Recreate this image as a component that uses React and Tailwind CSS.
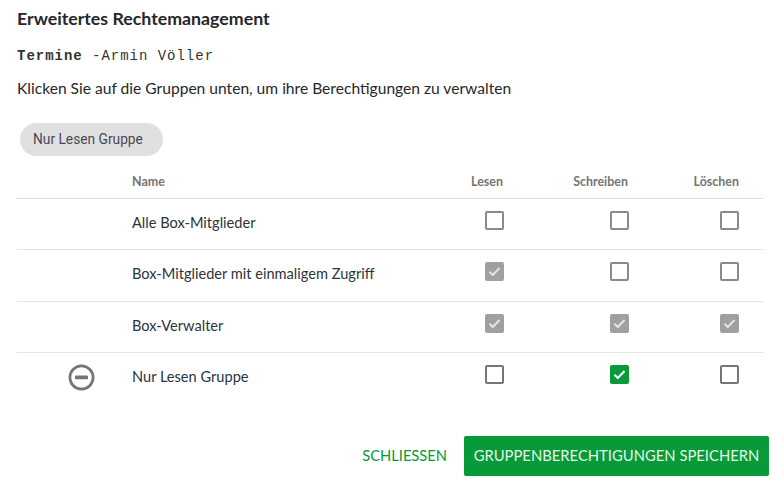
import React from "react";

function Box({ state }) {
  if (state === "off") {
    return <span className="block h-[19px] w-[19px] rounded-[2px] border-2 border-[#8a8a8a] bg-white" />;
  }
  if (state === "strong") {
    return <span className="block h-[19px] w-[19px] rounded-[2px] border-2 border-[#757575] bg-white" />;
  }
  const bg = state === "green" ? "bg-[#069a38]" : "bg-[#a0a0a0]";
  return (
    <span className={`flex h-[19px] w-[19px] items-center justify-center rounded-[2px] ${bg}`}>
      <svg width="13" height="11" viewBox="0 0 13 11" fill="none">
        <path d="M1.5 5.8 L4.8 9 L11.5 2" stroke={state === "green" ? "#ffffff" : "#e4e4e4"} strokeWidth="2.1" />
      </svg>
    </span>
  );
}

function Row({ name, boxes, icon, last, h }) {
  return (
    <div className={`grid grid-cols-[115px_1fr_100px_125px_110px] items-center pr-6 ${h} ${last ? "" : "border-b border-[#e4e4e4]"}`}>
      <div className="flex justify-center pl-[15px] pb-[2px] pr-[2px]">
        {icon && (
          <svg width="27" height="27" viewBox="0 0 27 27" fill="none">
            <circle cx="13.5" cy="13.5" r="11.6" stroke="#757575" strokeWidth="2.7" />
            <rect x="7" y="11.6" width="13" height="3.6" rx="0.8" fill="#757575" />
          </svg>
        )}
      </div>
      <div className="pb-[3px] text-[14.6px] text-[#2b3440]">{name}</div>
      {boxes.map((b, i) => (
        <div key={i} className="flex justify-end pb-[8px]">
          <Box state={b} />
        </div>
      ))}
    </div>
  );
}

export default function App() {
  return (
    <div className="h-[488px] w-[782px] overflow-hidden bg-white pl-[17px] pr-[19px] pt-[8px] font-['Lato','sans-serif']">
      <h1 className="text-[17.75px] font-bold leading-[20px] text-[#25282c]">Erweitertes Rechtemanagement</h1>
      <div className="mt-[18px] font-['Liberation_Mono','monospace'] text-[14px] tracking-[0.98px] leading-[20px] text-[#333333]">
        <b>Termine</b> -Armin Völler
      </div>
      <p className="mt-[12px] text-[15.6px] leading-[20px] text-[#25282c]">
        Klicken Sie auf die Gruppen unten, um ihre Berechtigungen zu verwalten
      </p>
      <div className="ml-[3px] mt-[25px] flex h-[33px] w-[143px] items-center rounded-full bg-[#e0e0e0] pl-[13px] font-['Roboto','sans-serif'] text-[13.75px] text-[#4a4656]">
        Nur Lesen Gruppe
      </div>
      <div className="mt-[8px] grid h-[35px] grid-cols-[115px_1fr_100px_125px_110px] items-center border-b border-[#e0e0e0] pt-[3px] pr-6 text-[12.45px] font-bold text-[#757575]">
        <div />
        <div>Name</div>
        <div className="text-right pr-px">Lesen</div>
        <div className="text-right pr-px">Schreiben</div>
        <div className="text-right">Löschen</div>
      </div>
      <Row h="h-[51px]" name="Alle Box-Mitglieder" boxes={["off", "off", "off"]} />
      <Row h="h-[52px]" name="Box-Mitglieder mit einmaligem Zugriff" boxes={["gray", "off", "off"]} />
      <Row h="h-[51px]" name="Box-Verwalter" boxes={["gray", "gray", "gray"]} />
      <Row h="h-[50px]" last icon name="Nur Lesen Gruppe" boxes={["strong", "green", "strong"]} />
      <div className="mt-[33px] flex items-center justify-end gap-[17px]">
        <button className="pb-[2px] text-[14.7px] text-[#069a38]">SCHLIESSEN</button>
        <button className="h-[40px] w-[305px] rounded-[2px] bg-[#069a38] pb-[2px] text-[14.8px] text-[#e6f5ea] shrink-0 -mr-[6px]">
          GRUPPENBERECHTIGUNGEN SPEICHERN
        </button>
      </div>
    </div>
  );
}
